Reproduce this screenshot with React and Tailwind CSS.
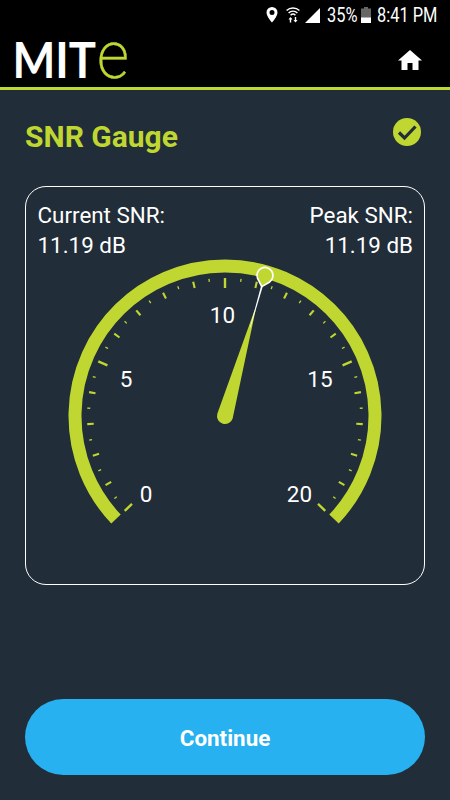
import React from 'react';

const LIME = '#bfd730';
const SWEEP = 133.4;
const MAX = 20;

const Gauge = ({ value }) => {
  const toAngle = (v) => (v / MAX) * SWEEP * 2 - SWEEP;
  const end = (SWEEP * Math.PI) / 180;
  const dx = 150 * Math.sin(end);
  const dy = -150 * Math.cos(end);
  const ticks = Array.from({ length: MAX * 2 + 1 }, (_, i) => i / 2);

  const getTick = (v) => {
    if (v % 5 === 0) {
      return { inner: 128, width: 2.4 };
    }
    return v % 1 === 0 ? { inner: 131.5, width: 2.1 } : { inner: 135, width: 1.3 };
  };

  const labels = [
    { text: '0', x: 146, y: 502 },
    { text: '5', x: 126, y: 387 },
    { text: '10', x: 222.5, y: 323 },
    { text: '15', x: 320, y: 387 },
    { text: '20', x: 299.5, y: 502 },
  ];

  return (
    <svg className="-mt-[5px] ml-[34px] block" width="330" height="280" viewBox="60 255 330 280">
      <g transform="translate(225 416)">
        <path
          d={`M${-dx} ${dy}A150 150 0 1 1 ${dx} ${dy}`}
          fill="none"
          stroke={LIME}
          strokeWidth="13"
        />
        {ticks.map((v) => {
          const { inner, width } = getTick(v);
          return (
            <line
              key={v}
              y1={-138}
              y2={-inner}
              stroke={LIME}
              strokeWidth={width}
              transform={`rotate(${toAngle(v)})`}
            />
          );
        })}
        <g transform={`rotate(${toAngle(value)})`}>
          <path d="M-8 0L-.5 -110H.5L8 0A8 8 0 0 1 -8 0Z" fill={LIME} />
          <path d="M-.9 -136H.9L.3 -92H-.3Z" fill="#fff" />
          <path
            d="M0 -134.500L-6.300 -141.200A8 8 0 1 1 6.300 -141.200Z"
            fill={LIME}
            stroke="#fff"
            strokeWidth="1.700"
            strokeLinejoin="round"
          />
        </g>
      </g>
      {labels.map((l) => (
        <text key={l.text} x={l.x} y={l.y} textAnchor="middle" fontSize="22.5" fill="#fff">
          {l.text}
        </text>
      ))}
    </svg>
  );
};

const StatusBar = () => (
  <div className="flex h-[30px] items-center justify-end pr-[13px] text-white">
    <svg width="12" height="16" viewBox="0 0 12 16" className="mr-2">
      <path
        d="M6 0a5.5 5.5 0 0 0-5.5 5.5C.5 9.500 6 15.500 6 15.500s5.500-6 5.500-10A5.500 5.500 0 0 0 6 0zm0 3a2.500 2.500 0 1 1 0 5 2.500 2.500 0 0 1 0-5z"
        fill="#fff"
      />
    </svg>
    <svg width="14" height="16" viewBox="0 0 14 16" className="mr-[5px]">
      <g fill="none" stroke="#fff" strokeWidth="1.400">
        <path d="M.6 3.600a9 9 0 0 1 12.800 0M2.600 6a6 6 0 0 1 8.800 0M4.600 8.200a3.500 3.500 0 0 1 4.800 0" />
        <path d="M4.500 11v4.500M9.500 10v4.500" />
      </g>
      <path d="M2.500 12.500l2-2.500 2 2.500zM7.500 13l2 2.500 2-2.500z" fill="#fff" />
    </svg>
    <svg width="15" height="15" viewBox="0 0 15 15" className="mr-[7px]">
      <path d="M15 0v15H0z" fill="#fff" />
    </svg>
    <span className="w-[29px] origin-left scale-x-[0.82] text-[20px] whitespace-nowrap">35%</span>
    <svg width="10" height="16" viewBox="0 0 10 16" className="mr-[6px] ml-[5px]">
      <path d="M3 0h4v1.500h3V16H0V1.500h3z" fill="#666" />
      <path d="M0 10.500h10V16H0z" fill="#fff" />
    </svg>
    <span className="w-[60px] origin-left scale-x-[0.82] text-[20px] whitespace-nowrap">8:41 PM</span>
  </div>
);

const Header = () => (
  <header className="h-[90px] border-b-[3px] border-[#bfd730] bg-black">
    <StatusBar />
    <div className="flex h-[57px] items-center justify-between pr-[28px] pl-[5px]">
      <svg className="overflow-visible" width="130" height="57" viewBox="5 30 130 57">
        <text
          x="12.5"
          y="78"
          fill="#fff"
          fontSize="50"
          fontWeight="700"
          fontFamily="Lato"
          textLength="83.5"
          lengthAdjust="spacingAndGlyphs"
        >
          MIT
        </text>
        <text
          x="97"
          y="78"
          fill={LIME}
          stroke={LIME}
          strokeWidth=".4"
          fontSize="67"
          fontWeight="200"
          fontFamily="Roboto"
          textLength="32"
          lengthAdjust="spacingAndGlyphs"
        >
          e
        </text>
      </svg>
      <svg width="24" height="20" viewBox="0 0 24 20" className="mt-[3px]">
        <path d="M12 0L0 10.500h3.500V20h6v-7h5v7h6v-9.500H24z" fill="#fff" />
      </svg>
    </div>
  </header>
);

export default function App() {
  return (
    <div className="flex h-[800px] w-[450px] flex-col bg-[#212d38] font-['Roboto',sans-serif]">
      <Header />
      <main className="flex flex-1 flex-col px-[25px] pb-[25px]">
        <div className="mt-[26px] flex h-[40px] items-center justify-between">
          <h1 className="text-[30px] font-bold text-[#bfd730]">SNR Gauge</h1>
          <svg width="28" height="28" viewBox="0 0 28 28" className="mr-[4px] -mt-[8px]">
            <circle cx="14" cy="14" r="14" fill={LIME} />
            <path d="M6 14.500l5.500 5.500L22.500 8.500" fill="none" stroke="#212d38" strokeWidth="3.200" />
          </svg>
        </div>
        <section className="mt-[30px] h-[399px] rounded-[21px] border border-white">
          <div className="flex justify-between pt-[13px] pr-[11px] pl-[11.5px] text-[22.4px] leading-[30px] text-white">
            <div>
              <p>Current SNR:</p>
              <p>11.19 dB</p>
            </div>
            <div className="text-right">
              <p>Peak SNR:</p>
              <p>11.19 dB</p>
            </div>
          </div>
          <Gauge value={11.19} />
        </section>
        <button className="mt-auto h-[76px] rounded-full bg-[#27b1f0] pt-[4px] text-[22.4px] font-bold text-white">
          Continue
        </button>
      </main>
    </div>
  );
}
